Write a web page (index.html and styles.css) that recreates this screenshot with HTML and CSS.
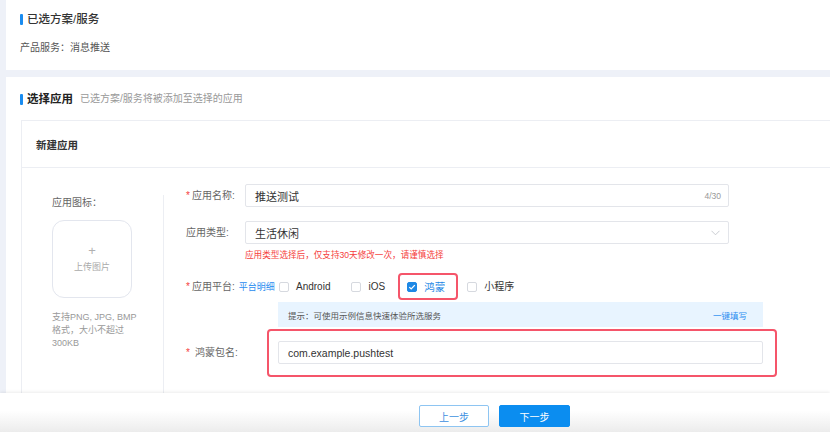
FILE: index.html
```html
<!DOCTYPE html>
<html lang="zh-CN">
<head>
<meta charset="utf-8">
<title>新建应用</title>
<link rel="stylesheet" href="styles.css">
</head>
<body>
<div class="page">
  <div class="main">
    <section class="card card-top">
      <h2 class="title">已选方案/服务</h2>
      <p class="product">产品服务：消息推送</p>
    </section>
    <section class="card card-app">
      <h2 class="title title-lg">选择应用<span class="subtitle">已选方案/服务将被添加至选择的应用</span></h2>
      <div class="panel">
        <div class="panel-head">新建应用</div>
        <div class="panel-body">
          <div class="icon-col">
            <div class="icon-label">应用图标：</div>
            <div class="upload">
              <span class="plus">+</span>
              <span class="upload-text">上传图片</span>
            </div>
            <p class="upload-desc">支持PNG, JPG, BMP<br>格式，大小不超过<br>300KB</p>
          </div>
          <div class="divider"></div>
          <div class="form-col">
            <div class="row">
              <label class="label"><span class="star">*</span>应用名称:</label>
              <div class="input"><span>推送测试</span><span class="count">4/30</span></div>
            </div>
            <div class="row row-gap">
              <label class="label">应用类型:</label>
              <div class="input"><span>生活休闲</span>
                <svg class="chev" width="9" height="6" viewBox="0 0 9 6"><path d="M0.5 0.8 L4.5 4.8 L8.5 0.8" fill="none" stroke="#c4c7cd" stroke-width="0.9"/></svg>
              </div>
            </div>
            <p class="error">应用类型选择后，仅支持30天修改一次，请谨慎选择</p>
            <div class="row row-platform">
              <div class="label-wide"><span class="star">*</span>应用平台:<a class="link">平台明细</a></div>
              <div class="options">
                <span class="opt opt-android"><span class="cb"></span>Android</span>
                <span class="opt opt-ios"><span class="cb"></span>iOS</span>
                <span class="opt opt-hl"><span class="cb checked"><svg width="8" height="8" viewBox="0 0 8 8"><path d="M1.3 4.1 L3.2 5.9 L6.8 2.1" fill="none" stroke="#fff" stroke-width="1.3"/></svg></span><span class="opt-blue">鸿蒙</span></span>
                <span class="opt"><span class="cb"></span>小程序</span>
              </div>
            </div>
            <div class="hint"><span>提示：可使用示例信息快速体验所选服务</span><a class="hint-link">一键填写</a></div>
            <div class="row row-pkg">
              <label class="label label-pkg"><span class="star star-wide">*</span>鸿蒙包名:</label>
              <div class="highlight">
                <div class="input input-pkg">com.example.pushtest</div>
              </div>
            </div>
          </div>
        </div>
      </div>
    </section>
  </div>
  <footer class="footer">
    <button class="btn btn-prev">上一步</button>
    <button class="btn btn-next">下一步</button>
  </footer>
</div>
</body>
</html>
```
FILE: styles.css
```css
* { box-sizing: border-box; margin: 0; padding: 0; }
html, body { width: 830px; height: 432px; overflow: hidden; }
body {
  background: #eef1f8;
  font-family: "Liberation Sans", "Noto Sans CJK SC", sans-serif;
  color: #333;
}
.page { display: flex; flex-direction: column; height: 432px; }
.main {
  flex: 1;
  overflow: hidden;
  padding-left: 6px;
  display: flex;
  flex-direction: column;
  gap: 7px;
}
.card { background: #fff; }
.card-top { height: 70px; flex: none; padding: 12px 0 0 14px; }
.title {
  display: flex;
  align-items: center;
  font-size: 11.5px;
  line-height: 14px;
  font-weight: 500;
  color: #333;
}
.title::before {
  content: "";
  width: 3px;
  height: 11px;
  background: #1a8cf0;
  border-radius: 1px;
  margin-right: 4px;
}
.product { margin-top: 15px; font-size: 10px; line-height: 14px; color: #555; }

.card-app { flex: 1; padding: 14px 0 0 14px; overflow: hidden; }
.title-lg { font-size: 11.5px; line-height: 16px; font-weight: 700; color: #222; }
.subtitle { margin-left: 7px; font-size: 10px; font-weight: 400; color: #999; }

.panel {
  margin: 13px 0 0 1px;
  border: 1px solid #eceef3;
  border-right: 0;
  background: #fff;
  height: 400px;
}
.panel-head {
  height: 47px;
  padding-left: 14px;
  display: flex;
  align-items: center;
  border-bottom: 1px solid #eceef3;
  font-size: 10.5px;
  font-weight: 700;
  color: #333;
}
.panel-body { display: flex; height: 100%; }
.icon-col { width: 141px; flex: none; padding: 28px 0 0 30px; }
.icon-label { font-size: 10px; line-height: 14px; color: #666; }
.upload {
  margin-top: 10px;
  width: 80px;
  height: 78px;
  border: 1px solid #e3e6ee;
  border-radius: 12px;
  display: flex;
  flex-direction: column;
  align-items: center;
  justify-content: center;
  gap: 4px;
}
.plus { font-size: 13px; line-height: 12px; color: #b0b0b0; font-weight: 300; }
.upload-text { font-size: 9px; line-height: 12px; color: #aaa; }
.upload-desc {
  margin-top: 13px;
  font-size: 9px;
  line-height: 13px;
  color: #999;
  white-space: nowrap;
}
.divider { width: 1px; flex: none; background: #eceef3; margin-top: 27px; }

.form-col { padding: 16px 0 0 22px; }
.row { display: flex; align-items: center; }
.row-gap { margin-top: 14px; }
.label {
  width: 59px;
  flex: none;
  font-size: 10px;
  line-height: 14px;
  color: #666;
  white-space: nowrap;
}
.star { color: #f5413d; margin-right: 2px; }
.star-wide { margin-right: 5px; }
.input {
  width: 484px;
  height: 23px;
  border: 1px solid #e3e5ea;
  border-radius: 2px;
  padding: 0 7px 0 9px;
  display: flex;
  align-items: center;
  justify-content: space-between;
  font-size: 11px;
  color: #333;
}
.count { font-size: 8.5px; color: #999; }
.chev { margin-right: 1px; }
.error {
  margin: 5px 0 0 59px;
  font-size: 8.6px;
  line-height: 12px;
  color: #f5413d;
}
.row-platform { margin-top: 12px; }
.label-wide {
  width: 92px;
  flex: none;
  font-size: 10px;
  line-height: 14px;
  color: #666;
  white-space: nowrap;
}
.link { margin-left: 4px; font-size: 9px; color: #2a8cf0; }
.options { display: flex; align-items: center; margin-left: 1px; }
.opt {
  display: flex;
  align-items: center;
  gap: 7px;
  font-size: 10px;
  line-height: 14px;
  color: #333;
}
.opt-android { margin-right: 21px; }
.opt-ios { margin-right: 13px; }
.opt-hl {
  height: 27px;
  border: 2px solid #f5556a;
  border-radius: 4px;
  padding: 0 11px 0 7px;
  margin-right: 9px;
}
.opt-blue { color: #1e88e5; font-size: 10.5px; }
.cb {
  width: 10px;
  height: 10px;
  flex: none;
  border: 1px solid #d6d9df;
  border-radius: 2px;
  background: #fff;
  display: flex;
  align-items: center;
  justify-content: center;
}
.cb.checked { background: #1e88e5; border-color: #1e88e5; }
.hint {
  margin: 2px 0 0 92px;
  width: 485px;
  height: 25px;
  background: #e8f4ff;
  padding: 0 16px 0 10px;
  display: flex;
  align-items: center;
  justify-content: space-between;
  font-size: 8.5px;
  color: #555;
}
.hint-link { color: #2a8cf0; }
.row-pkg { margin-top: 2px; }
.label-pkg { width: 81px; }
.highlight {
  border: 2px solid #f5556a;
  border-radius: 4px;
  padding: 10px 12px 11px 9px;
}
.input-pkg { width: 485px; font-size: 10.5px; }

.footer {
  height: 39px;
  flex: none;
  background: linear-gradient(#fff 45%, #ececec);
  box-shadow: 0 -1px 3px rgba(0, 0, 0, 0.08);
  padding: 12px 0 0 419px;
  display: flex;
  align-items: flex-start;
  gap: 10px;
  position: relative;
}
.btn {
  width: 71px;
  height: 22px;
  border-radius: 2px;
  font-family: inherit;
  font-size: 10px;
}
.btn-prev { border: 1px solid #8ec5f2; color: #3d8fe0; background: #fff; width: 70px; }
.btn-next { border: 1px solid #0b8df0; background: #0b8df0; color: #fff; }
```
